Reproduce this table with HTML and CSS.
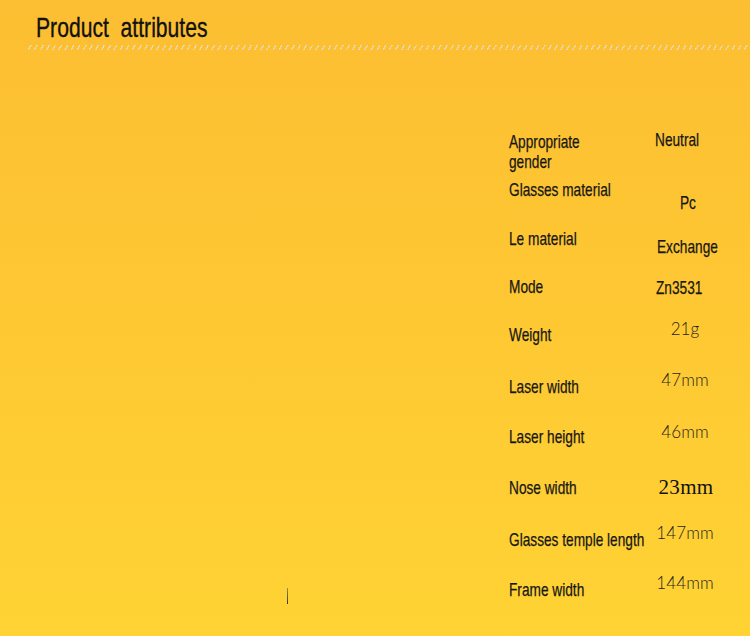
FILE: index.html
```html
<!DOCTYPE html>
<html>
<head>
<meta charset="utf-8">
<link rel="stylesheet" href="styles.css">
</head>
<body>
<div class="page">
  <header class="head">
    <h1 class="title"><span class="nar">Product&nbsp; attributes</span></h1>
    <div class="hatch"></div>
  </header>
  <section class="attrs">
    <div class="row r1"><div class="lab"><span class="nar">Appropriate<br>gender</span></div><div class="val cond left up2"><span class="nar">Neutral</span></div></div>
    <div class="row r2"><div class="lab"><span class="nar">Glasses material</span></div><div class="val cond left dn13 in25"><span class="nar">Pc</span></div></div>
    <div class="row r3"><div class="lab"><span class="nar">Le material</span></div><div class="val cond left dn8 in2"><span class="nar">Exchange</span></div></div>
    <div class="row r4"><div class="lab"><span class="nar">Mode</span></div><div class="val cond left dn1 in1"><span class="nar">Zn3531</span></div></div>
    <div class="row r5"><div class="lab"><span class="nar">Weight</span></div><div class="val thin up6">21g</div></div>
    <div class="row r6"><div class="lab"><span class="nar">Laser width</span></div><div class="val thin up7">47mm</div></div>
    <div class="row r7"><div class="lab"><span class="nar">Laser height</span></div><div class="val thin up5">46mm</div></div>
    <div class="row r8"><div class="lab"><span class="nar">Nose width</span></div><div class="val serif">23mm</div></div>
    <div class="row r9"><div class="lab"><span class="nar">Glasses temple length</span></div><div class="val thin up7">147mm</div></div>
    <div class="row r10"><div class="lab"><span class="nar">Frame width</span></div><div class="val thin up7">144mm</div></div>
  </section>
  <span class="tick"></span>
</div>
</body>
</html>
```
FILE: styles.css
```css
html, body {
  margin: 0;
  padding: 0;
}
body {
  width: 750px;
  height: 636px;
  overflow: hidden;
  background: linear-gradient(180deg, #fcbe32 0%, #fec833 50%, #ffd334 100%);
  font-family: "Liberation Sans", Arial, sans-serif;
  color: #1b1b1b;
}
.page {
  position: relative;
  height: 636px;
}
.nar {
  display: inline-block;
  white-space: nowrap;
  transform: scaleX(0.72);
  transform-origin: 0 0;
  -webkit-text-stroke: 0.25px currentColor;
}
.head {
  padding-top: 12px;
}
.title {
  margin: 0 0 0 36px;
  font-size: 28px;
  font-weight: normal;
  line-height: 32px;
  color: #111;
}
.title .nar {
  transform: scaleX(0.755);
  -webkit-text-stroke: 0.35px currentColor;
}
.hatch {
  margin: 1px 0 0 28px;
  height: 5px;
  background-image: repeating-linear-gradient(120deg, transparent 0 2px, rgba(228, 224, 214, 0.75) 2px 3.3px, transparent 3.3px 5.3px);
}
.attrs {
  margin: 82px 0 0 509px;
  width: 230px;
}
.row {
  display: flex;
  align-items: flex-start;
}
.r1 { height: 48px; }
.r2 { height: 49px; }
.r3 { height: 48px; }
.r4 { height: 48px; }
.r5 { height: 52px; }
.r6 { height: 50px; }
.r7 { height: 51px; }
.r8 { height: 52px; }
.r9 { height: 50px; }
.r10 { height: 40px; }
.lab {
  width: 146px;
  font-size: 19px;
  line-height: 20px;
  color: #161616;
}
.val {
  box-sizing: border-box;
  width: 68px;
  text-align: center;
  line-height: 20px;
}
.val.left {
  text-align: left;
}
.cond {
  font-size: 19px;
  color: #161616;
}
.in1 { padding-left: 1px; }
.in2 { padding-left: 2px; }
.in25 { padding-left: 25px; }
.thin {
  font-family: Lato, "Open Sans", sans-serif;
  font-weight: 300;
  font-size: 17px;
  color: #1e1e1e;
  letter-spacing: 0.1px;
  padding-right: 8px;
}
.serif {
  font-family: "Liberation Serif", serif;
  font-size: 21px;
  font-weight: 500;
  margin-top: -1px;
  letter-spacing: 0.3px;
  padding-right: 6px;
  color: #111;
}
.up2 { margin-top: -2px; }
.dn1 { margin-top: 1px; }
.dn8 { margin-top: 8px; }
.dn13 { margin-top: 13px; }
.up5 { margin-top: -5px; }
.up6 { margin-top: -6px; }
.up7 { margin-top: -7px; }
.tick {
  position: absolute;
  left: 287px;
  top: 588px;
  width: 1px;
  height: 16px;
  background: linear-gradient(180deg, #9b8a4a, #3a3520);
}
```
